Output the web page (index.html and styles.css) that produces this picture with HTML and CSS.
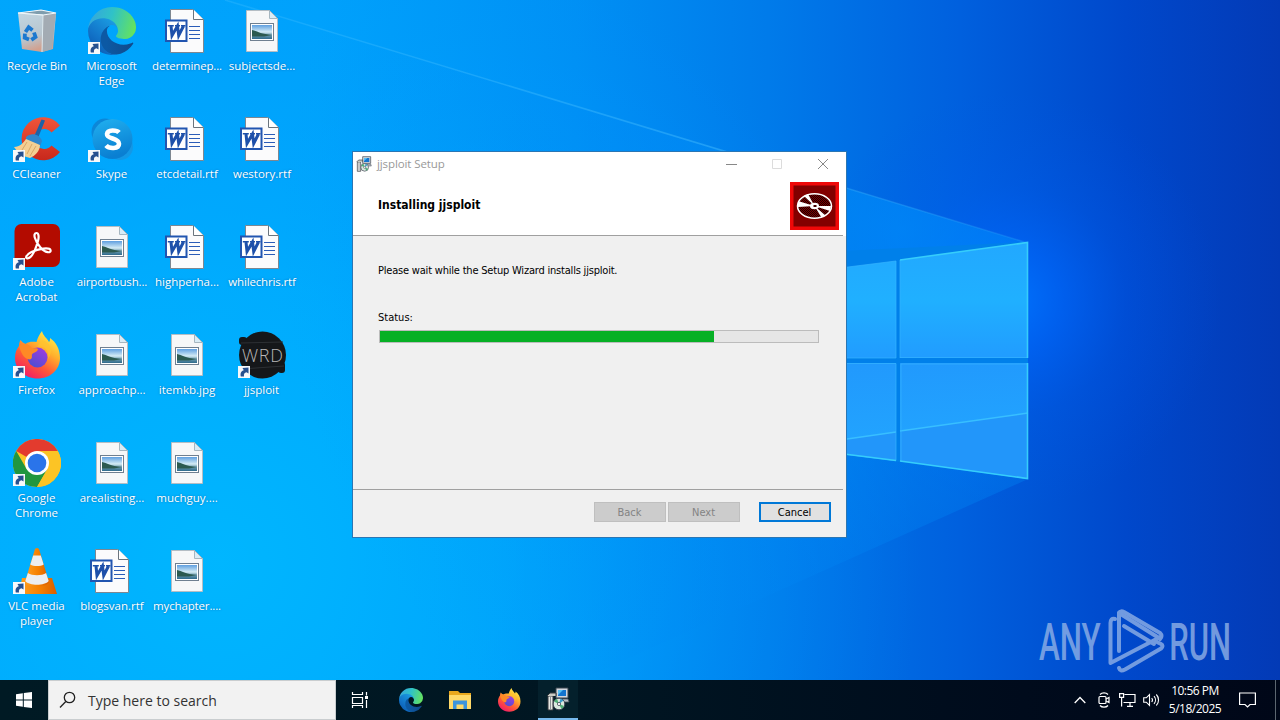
FILE: index.html
```html
<!DOCTYPE html>
<html lang="en">

<head>
    <meta charset="UTF-8">
    <meta name="viewport" content="width=device-width, initial-scale=1.0">
    <title>Desktop</title>
    <link rel="stylesheet" href="styles.css">
</head>

<body>
    <!-- shared icons -->
    <svg class="sprite" aria-hidden="true">
        <defs>
            <linearGradient id="edge-a" x1="0.2" y1="0.7" x2="1" y2="0.7">
                <stop offset="0" stop-color="#0c59a4" />
                <stop offset="1" stop-color="#114a8b" />
            </linearGradient>
            <linearGradient id="edge-b" x1="0.8" y1="0.1" x2="0.2" y2="1">
                <stop offset="0" stop-color="#1b9de2" />
                <stop offset="0.6" stop-color="#1273c8" />
                <stop offset="1" stop-color="#0a58b0" />
            </linearGradient>
            <linearGradient id="edge-c" x1="0" y1="0.4" x2="1" y2="0.6">
                <stop offset="0" stop-color="#35a6dd" />
                <stop offset="0.45" stop-color="#2fc2c8" />
                <stop offset="1" stop-color="#66e35c" />
            </linearGradient>
            <linearGradient id="bin-l" x1="0" y1="0" x2="0.3" y2="1">
                <stop offset="0" stop-color="#c4d8e4" />
                <stop offset="0.7" stop-color="#b8c5ce" />
                <stop offset="1" stop-color="#d2a08e" />
            </linearGradient>
            <linearGradient id="fox" x1="0.85" y1="0.05" x2="0.25" y2="1">
                <stop offset="0" stop-color="#fff14a" />
                <stop offset="0.35" stop-color="#ffb02c" />
                <stop offset="0.65" stop-color="#ff5a36" />
                <stop offset="1" stop-color="#f0186a" />
            </linearGradient>
            <linearGradient id="fox-in" x1="0.8" y1="0" x2="0.2" y2="1">
                <stop offset="0" stop-color="#a03ce0" />
                <stop offset="1" stop-color="#4a4fd0" />
            </linearGradient>
            <linearGradient id="skype" x1="0" y1="0" x2="0.3" y2="1">
                <stop offset="0" stop-color="#21b1f0" />
                <stop offset="1" stop-color="#0a7fd2" />
            </linearGradient>
            <linearGradient id="cc" x1="0" y1="0" x2="0" y2="1">
                <stop offset="0" stop-color="#f0553a" />
                <stop offset="1" stop-color="#c8281c" />
            </linearGradient>
            <linearGradient id="vlc" x1="0" y1="0" x2="1" y2="0">
                <stop offset="0" stop-color="#ffa022" />
                <stop offset="0.55" stop-color="#f58000" />
                <stop offset="1" stop-color="#d85e00" />
            </linearGradient>
            <linearGradient id="photo" x1="0" y1="0" x2="0" y2="1">
                <stop offset="0" stop-color="#5f9fe0" />
                <stop offset="0.5" stop-color="#d5ecf5" />
                <stop offset="0.7" stop-color="#6f9db0" />
                <stop offset="1" stop-color="#2e6a8c" />
            </linearGradient>
        </defs>

        <symbol id="i-shortcut" viewBox="0 0 12 12">
            <rect width="12" height="12" fill="#f7f8fa" />
            <path d="M2.800 10.500C2 7 3.500 4.700 5.800 4.300L4.500 2l6-.4v6L8.500 6.200C6.500 6.500 5.600 8 6 10.500z" fill="#27508f" />
        </symbol>

        <symbol id="i-bin" viewBox="0 0 48 48">
            <path d="M5 5l23-3 15 3-3 36-11 3-20-3z" fill="url(#bin-l)" />
            <path d="M5 5l23-3 15 3-13 2z" fill="#7f9dae" />
            <path d="M30 7l13-2-4 36-10 3z" fill="#a3abb3" />
            <path d="M5 5l25 2-1 37" fill="none" stroke="#dde9ef" stroke-width="1" />
            <path d="M5 5l23-3 15 3-13 2z" fill="none" stroke="#eef6fa" stroke-width="1.200" />
            <g fill="none" stroke="#1b78cf" stroke-width="3.800">
                <path d="M12.500 24l3.200-4.800 3.800 3" />
                <path d="M21 24.500l1.500 4.500-4.200 2.800" />
                <path d="M16 31.500l-4.300-1.800.2-4" />
            </g>
        </symbol>

        <symbol id="i-edge" viewBox="0 0 256 256">
            <path fill="url(#edge-a)" d="M235.68 190.46a93.73 93.73 0 01-10.54 4.71 101.87 101.87 0 01-35.9 6.46c-47.32 0-88.54-32.55-88.54-74.32A31.48 31.48 0 01117.13 100c-42.8 1.8-53.8 46.4-53.8 72.53 0 73.88 68.09 81.37 82.76 81.37 7.91 0 19.84-2.3 27-4.56l1.31-.44a128.34 128.34 0 0066.6-52.8 4 4 0 00-5.32-5.64z" />
            <path fill="url(#edge-b)" d="M105.73 241.42a79.2 79.2 0 01-22.74-21.34 80.72 80.72 0 0129.53-120c3.12-1.47 8.45-4.13 15.54-4a32.35 32.35 0 0125.69 13 31.88 31.88 0 016.36 18.66c0-.21 24.46-79.6-80-79.6-43.9 0-80 41.66-80 78.21a130.15 130.15 0 0012.11 56 128 128 0 00156.38 67.11 75.55 75.55 0 01-62.78-8z" />
            <path fill="url(#edge-c)" d="M152.33 148.86c-.81 1.05-3.3 2.5-3.3 5.66 0 2.61 1.7 5.12 4.72 7.23 14.38 10 41.49 8.68 41.56 8.68a59.56 59.56 0 0030.27-8.35 61.38 61.38 0 0030.43-52.88c.26-22.41-8-37.31-11.34-43.91C223.46 23.95 177.72 0 128 0A128 128 0 000 126.2c.48-36.54 36.8-66.05 80-66.05 3.5 0 23.46.34 42 10.07 16.34 8.58 24.9 18.94 30.85 29.21 6.18 10.67 7.28 24.15 7.28 29.52s-2.74 13.33-7.8 19.91z" />
        </symbol>

        <symbol id="i-word" viewBox="0 0 48 48">
            <path d="M7.500 1.500h22l11 10v33h-33z" fill="#fbfbfc" stroke="#7d8791" />
            <path d="M30.500 1.500v10h10" fill="#fff" stroke="#6b747d" />
            <path d="M26 18.500h11M26 22.500h11M26 26.500h11M26 30.500h11" stroke="#2b5cb8" stroke-width="1.200" />
            <rect x="3" y="12.500" width="20.500" height="20.500" fill="#fff" stroke="#2155b0" stroke-width="2" />
            <path d="M8 18l1 9.500L14.500 18l1.200 9.500L20.500 18" fill="none" stroke="#1e50aa" stroke-width="3" />
            <path d="M4.800 17.700h6M12 17.700h5M18 17.700h4.500" fill="none" stroke="#1e50aa" stroke-width="1.500" />
        </symbol>

        <symbol id="i-image" viewBox="0 0 48 48">
            <path d="M8.500 2.500h23l8 8v33h-31z" fill="#f6f7f8" stroke="#b4bdc4" />
            <path d="M31.500 2.500v8h8z" fill="#d9ecf6" stroke="#a6b6c0" />
            <rect x="12.500" y="15.500" width="23" height="17" fill="#fff" stroke="#6f7f90" />
            <rect x="14" y="17" width="20" height="14" fill="url(#photo)" />
            <path d="M14 22c5 1 8 4 20 5l-8 1.500H14z" fill="#2c5a50" />
        </symbol>

        <symbol id="i-ccleaner" viewBox="0 0 48 48">
            <path d="M47 10.500A21.500 21.500 0 1 0 47 37L38.500 30.500a10 10 0 1 1 0-13z" fill="url(#cc)" />
            <path d="M28.500 4.500l3.500 1-8 20-4-1.500z" fill="#1c62a8" />
            <path d="M13 22c5-5 14-3 16 4l-2 6-14-6z" fill="#2f86cc" />
            <path d="M13 24l14 6c0 6-5 11-10 13l-10-3-6-8c6 0 9-4 12-8z" fill="#f3cf93" />
            <path d="M14 27l-5 8M19 29l-5 10M23 31l-6 10" stroke="#d9a765" stroke-width="1" />
        </symbol>

        <symbol id="i-skype" viewBox="0 0 48 48">
            <circle cx="17" cy="17" r="13.500" fill="#0c87d8" />
            <circle cx="32" cy="32" r="13" fill="#1398e6" />
            <circle cx="24.500" cy="24" r="20" fill="url(#skype)" />
            <path d="M31 17.500c-2-2.300-11.500-3.500-12 1.500-.4 5.500 12 3.500 12 9.800 0 5.500-10 5-13 1.700" fill="none" stroke="#fff" stroke-width="4.600" />
        </symbol>

        <symbol id="i-acrobat" viewBox="0 0 48 48">
            <rect x="1.500" y="1" width="45.500" height="43" rx="7" fill="#b30b00" />
            <path d="M23.500 10c-4 0-1.800 8 4 14.500 4.500 5.500 11 6 10 2.500-1-3-12-1.500-19 2-6 3-6.500 6.500-3.800 6.300 4-.3 8-9.300 10.300-17.300 1.200-4.500.5-8-1.500-8z" fill="none" stroke="#fff" stroke-width="2.200" />
        </symbol>

        <symbol id="i-firefox" viewBox="0 0 48 48">
            <path d="M29 0c1 5 5 7 7 11 1-1 1-2 1-4 6 4 10 11 10 20 0 12-10 20.500-22.500 20.500S2 38.500 2 27c0-5 1.500-9 4-12 0-2 .4-4 1.500-6 1.500 2 3 3.200 5 4 4-3 8-2 11-2 1-4 3-8 5.500-11z" fill="url(#fox)" />
            <circle cx="24.500" cy="26.500" r="10" fill="url(#fox-in)" />
            <path d="M6 15c5-4 10-2 13 2 4 .3 6 0 6 1.500-.5 2.500-5 3-6 5-.5 1.500 1 4-2 5-4 0-8-3-11-13.500z" fill="#ff8a25" />
            <path d="M24 16c7-2 13 4 11 12 6-8 2-17-6-19z" fill="#ffc32e" opacity=".7" />
        </symbol>

        <symbol id="i-chrome" viewBox="0 0 48 48">
            <circle cx="24" cy="24" r="24" fill="#fcc425" />
            <path d="M24 24L3.200 12A24 24 0 0 1 44.800 12H24z" fill="#e33b2e" />
            <path d="M3.200 12A24 24 0 0 0 24 48l10.400-18L24 24l-10.400 6z" fill="#21963f" />
            <path d="M24 12h20.800A24 24 0 0 1 24 48l10.400-18z" fill="#fcc425" />
            <circle cx="24" cy="24" r="12" fill="#fff" />
            <circle cx="24" cy="24" r="9.300" fill="#2a74ea" />
        </symbol>

        <symbol id="i-vlc" viewBox="0 0 48 48">
            <path d="M9 31h30l5 16H6z" fill="url(#vlc)" />
            <path d="M24 1c1.200 0 2 .8 2.400 2.300L36 35c-2 6-22 6-24 0l9.600-31.700C22 1.800 22.800 1 24 1z" fill="url(#vlc)" />
            <path d="M20.200 8.500h7.600l2.900 9c-3 2-10.400 2-13.400 0z" fill="#eceef0" />
            <path d="M14.900 26c4 3 14.200 3 18.200 0l2.600 8c-4 5-19.400 5-23.400 0z" fill="#eceef0" />
        </symbol>

        <symbol id="i-installer" viewBox="0 0 24 24">
            <path d="M10 1h12v10H10z" fill="#d3d8df" stroke="#39424c" />
            <path d="M12 3h8v6h-8z" fill="#1374cf" />
            <path d="M12 3h5l-5 5z" fill="#56c1f5" />
            <path d="M12 12h10l1 3H11z" fill="#b9bfc6" stroke="#4c545e" stroke-width=".8" />
            <path d="M2 9h5v14H2z" fill="#e8e8e4" stroke="#34383e" />
            <path d="M1 9l3-3h6v3" fill="#c9cbc4" stroke="#34383e" />
            <path d="M4.500 10v12" stroke="#8c8f94" />
            <circle cx="13" cy="17" r="5.800" fill="#d9e8df" stroke="#445" />
            <path d="M13 17l-5-2.500a5.500 5.500 0 0 1 3-2.700zM13 17l5 2a5.500 5.500 0 0 1-2.500 3z" fill="#4fae76" />
            <path d="M13 17l1.500-5.500a5.500 5.500 0 0 1 3 2z" fill="#3b9cc9" />
            <circle cx="13" cy="17" r="1.600" fill="#fff" stroke="#445" stroke-width=".8" />
        </symbol>
    </svg>

    <div class="desktop">
        <svg class="wallpaper" viewBox="0 0 1280 720" aria-hidden="true">
            <defs>
                <linearGradient id="sky" x1="0" y1="0" x2="1" y2="0">
                    <stop offset="0" stop-color="#00a8fb" />
                    <stop offset="0.25" stop-color="#00a2fb" />
                    <stop offset="0.45" stop-color="#0090f4" />
                    <stop offset="0.6" stop-color="#007bea" />
                    <stop offset="0.75" stop-color="#0060de" />
                    <stop offset="0.88" stop-color="#0048cb" />
                    <stop offset="1" stop-color="#033ab6" />
                </linearGradient>
                <radialGradient id="lowleft" gradientUnits="userSpaceOnUse" cx="220" cy="560" r="700">
                    <stop offset="0" stop-color="#00b8ff" stop-opacity="0.9" />
                    <stop offset="0.4" stop-color="#00b0ff" stop-opacity="0.65" />
                    <stop offset="0.75" stop-color="#00a0ff" stop-opacity="0.25" />
                    <stop offset="1" stop-color="#0090ff" stop-opacity="0" />
                </radialGradient>
                <radialGradient id="glow" gradientUnits="userSpaceOnUse" cx="1010" cy="300" r="210">
                    <stop offset="0" stop-color="#0074ff" stop-opacity="0.9" />
                    <stop offset="0.25" stop-color="#0068ff" stop-opacity="0.6" />
                    <stop offset="0.55" stop-color="#005ef4" stop-opacity="0.25" />
                    <stop offset="1" stop-color="#0055e8" stop-opacity="0" />
                </radialGradient>
                <radialGradient id="beam" gradientUnits="userSpaceOnUse" cx="900" cy="230" r="620">
                    <stop offset="0" stop-color="#0094ff" stop-opacity="0.6" />
                    <stop offset="0.4" stop-color="#008cf8" stop-opacity="0.35" />
                    <stop offset="0.7" stop-color="#0088f4" stop-opacity="0.12" />
                    <stop offset="1" stop-color="#0088f4" stop-opacity="0" />
                </radialGradient>
                <linearGradient id="ray" gradientUnits="userSpaceOnUse" x1="225" y1="0" x2="1028" y2="0">
                    <stop offset="0" stop-color="#4fc4ff" stop-opacity="0.25" />
                    <stop offset="0.6" stop-color="#4fc4ff" stop-opacity="0.4" />
                    <stop offset="1" stop-color="#4fc4ff" stop-opacity="0.15" />
                </linearGradient>
                <linearGradient id="pane" x1="0" y1="0" x2="0" y2="1">
                    <stop offset="0" stop-color="#22a8ff" />
                    <stop offset="0.5" stop-color="#20b0ff" />
                    <stop offset="1" stop-color="#219cff" />
                </linearGradient>
                <linearGradient id="pane-low" x1="0" y1="0" x2="0.1" y2="1">
                    <stop offset="0" stop-color="#2199fd" />
                    <stop offset="1" stop-color="#22a8ff" />
                </linearGradient>
            </defs>
            <rect width="1280" height="720" fill="url(#sky)" />
            <rect width="1280" height="720" fill="url(#lowleft)" />
            <rect width="1280" height="720" fill="url(#glow)" />
            <path d="M225 0L1028 243v236L580 680H0V0z" fill="url(#beam)" />
            <path d="M225 0L1028 243" stroke="url(#ray)" stroke-width="1.500" />
            <path d="M840 251l188-9v237l-188-25z" fill="#0080ea" />
            <path d="M840 268l56-7v97h-56zM900 260l128-18v116H900z" fill="url(#pane)" />
            <path d="M840 363h56v98l-56-7zM900 363h128v116l-128-18z" fill="url(#pane-low)" />
            <path d="M840 440l56-8v29l-56-7zM900 431l128-18v66l-128-18z" fill="#2296fa" />
            <path d="M840 440l56-8M900 431l128-18" stroke="#38bfff" stroke-width="1.500" />
            <path d="M840 268l56-7v97M900 358V260M840 358h56M900 357.500h127M840 363.500h56v97M901 461v-97h126" fill="none" stroke="#35b3ff" stroke-opacity=".7" />
            <path d="M900 260l127.500-17.500V358M1027.500 363v115.500L900 461M896 460.500l-56-7" fill="none" stroke="#36cdfb" stroke-width="1.600" />
        </svg>

        <div class="icons">
            <div class="icon"><svg><use href="#i-bin" /></svg><span>Recycle Bin</span></div>
            <div class="icon shortcut"><svg><use href="#i-ccleaner" /></svg><svg class="arrow"><use href="#i-shortcut" /></svg><span>CCleaner</span></div>
            <div class="icon shortcut"><svg><use href="#i-acrobat" /></svg><svg class="arrow"><use href="#i-shortcut" /></svg><span>Adobe Acrobat</span></div>
            <div class="icon shortcut"><svg><use href="#i-firefox" /></svg><svg class="arrow"><use href="#i-shortcut" /></svg><span>Firefox</span></div>
            <div class="icon shortcut"><svg><use href="#i-chrome" /></svg><svg class="arrow"><use href="#i-shortcut" /></svg><span>Google Chrome</span></div>
            <div class="icon shortcut"><svg><use href="#i-vlc" /></svg><svg class="arrow"><use href="#i-shortcut" /></svg><span>VLC media player</span></div>

            <div class="icon shortcut"><svg><use href="#i-edge" /></svg><svg class="arrow"><use href="#i-shortcut" /></svg><span>Microsoft Edge</span></div>
            <div class="icon shortcut"><svg><use href="#i-skype" /></svg><svg class="arrow"><use href="#i-shortcut" /></svg><span>Skype</span></div>
            <div class="icon long"><svg><use href="#i-image" /></svg><span>airportbush...</span></div>
            <div class="icon"><svg><use href="#i-image" /></svg><span>approachp...</span></div>
            <div class="icon"><svg><use href="#i-image" /></svg><span>arealisting...</span></div>
            <div class="icon"><svg><use href="#i-word" /></svg><span>blogsvan.rtf</span></div>

            <div class="icon long"><svg><use href="#i-word" /></svg><span>determinep...</span></div>
            <div class="icon"><svg><use href="#i-word" /></svg><span>etcdetail.rtf</span></div>
            <div class="icon"><svg><use href="#i-word" /></svg><span>highperha...</span></div>
            <div class="icon"><svg><use href="#i-image" /></svg><span>itemkb.jpg</span></div>
            <div class="icon"><svg><use href="#i-image" /></svg><span>muchguy....</span></div>
            <div class="icon long"><svg><use href="#i-image" /></svg><span>mychapter....</span></div>

            <div class="icon"><svg><use href="#i-image" /></svg><span>subjectsde...</span></div>
            <div class="icon"><svg><use href="#i-word" /></svg><span>westory.rtf</span></div>
            <div class="icon long"><svg><use href="#i-word" /></svg><span>whilechris.rtf</span></div>
            <div class="icon shortcut">
                <svg viewBox="0 0 48 48">
                    <circle cx="24.500" cy="24" r="23.500" fill="#15171a" />
                    <rect x="1" y="6" width="8" height="8" rx="3" fill="#15171a" />
                    <rect x="40" y="31" width="7" height="11" rx="3" fill="#15171a" />
                    <path d="M3 12l42-1M4 38l42-3" stroke="#2d3034" />
                    <text x="4" y="31" class="wrd-text" textLength="41">WRD</text>
                </svg>
                <svg class="arrow"><use href="#i-shortcut" /></svg>
                <span>jjsploit</span>
            </div>
        </div>

        <svg class="watermark" viewBox="0 0 200 70" aria-label="ANY RUN">
            <g transform="scale(0.6 1)">
                <text x="5" y="55" textLength="103" lengthAdjust="spacingAndGlyphs">ANY</text>
                <text x="222" y="55" textLength="103" lengthAdjust="spacingAndGlyphs">RUN</text>
            </g>
            <g fill="none" stroke-width="4" stroke-linejoin="round" stroke-linecap="round">
                <path d="M79 14c-3-1-4.500 1-4.500 4v40l46-24" />
                <path d="M83 46V8l40 25" />
                <path d="M88 21l30 18" />
                <path d="M83 63c1 3 3 3 6 1.500l36-21c2-2 2-3.500 0-4.500l-6-3" />
                <path d="M83 8c1-2 3-2 5-1l36 21c2 2 2 4 0 6" />
            </g>
        </svg>

        <div class="window">
            <div class="titlebar">
                <svg class="app-icon"><use href="#i-installer" /></svg>
                <span class="title">jjsploit Setup</span>
                <svg class="controls" viewBox="0 0 104 12" fill="none">
                    <path d="M0 6.500h11" stroke="#888" />
                    <path d="M46.500 1.500h9v9h-9z" stroke="#dcdcdc" />
                    <path d="M92 1l10 10M102 1L92 11" stroke="#888" />
                </svg>
            </div>
            <div class="header">
                <h2>Installing jjsploit</h2>
                <svg class="disc" viewBox="0 0 49 48">
                    <defs>
                        <pattern id="dots" width="2" height="2" patternUnits="userSpaceOnUse">
                            <rect width="2" height="2" fill="#7c0000" />
                            <rect width="1" height="1" fill="#1c0000" />
                            <rect x="1" y="1" width="1" height="1" fill="#1c0000" />
                        </pattern>
                    </defs>
                    <rect width="49" height="48" fill="#ee0808" />
                    <rect x="3.500" y="3.500" width="42" height="41" fill="#820000" />
                    <ellipse cx="24.500" cy="24" rx="17" ry="12.300" fill="url(#dots)" stroke="#fff" stroke-width="1.500" />
                    <path d="M24.500 24L8 19v6zM24.500 24L14 14l4-2zM24.500 24L41 24l-1 5zM24.500 24l7 11.500 4-2z" fill="#fff" />
                    <ellipse cx="24.500" cy="24" rx="4.500" ry="3.200" fill="#fff" />
                    <rect x="23.500" y="23" width="3" height="2" fill="#400" />
                </svg>
            </div>
            <div class="content">
                <p class="message">Please wait while the Setup Wizard installs jjsploit.</p>
                <p class="status">Status:</p>
                <div class="progress">
                    <div class="bar" style="width: 76.3%"></div>
                </div>
            </div>
            <div class="footer">
                <button disabled>Back</button>
                <button disabled>Next</button>
                <button class="cancel">Cancel</button>
            </div>
        </div>
    </div>

    <div class="taskbar">
        <div class="start">
            <svg width="16" height="16" viewBox="0 0 16 16" fill="#fff">
                <path d="M0 2.200L6.800 1.200V7.500H0zM7.800 1.100L16 0v7.500H7.800zM0 8.500h6.800v6.300L0 13.800zM7.800 8.500H16V16l-8.200-1.100z" />
            </svg>
        </div>
        <div class="search">
            <svg width="18" height="18" viewBox="0 0 18 18" fill="none" stroke="#222" stroke-width="1.300">
                <circle cx="10.500" cy="6.500" r="5.200" />
                <path d="M6.800 10.500L1 16.500" />
            </svg>
            <span>Type here to search</span>
        </div>
        <div class="task">
            <svg width="18" height="16" viewBox="0 0 18 16" fill="none" stroke="#fff" stroke-width="1.200">
                <path d="M1.500 0v2.500h10V0M1.500 5.500h10v6h-10zM1.500 16v-2.500h10V16M15.500 0v3.500M15.500 8v8" />
                <path d="M14 4h3v3h-3z" fill="#fff" stroke="none" />
            </svg>
        </div>
        <div class="task"><svg width="24" height="24"><use href="#i-edge" /></svg></div>
        <div class="task">
            <svg width="22" height="20" viewBox="0 0 22 20">
                <path d="M0 1h9l2 2h11v16H0z" fill="#e9a81e" />
                <path d="M0 5h22v14H0z" fill="#ffd969" />
                <path d="M4 10.500h14V19h-3.500v-4.500h-7V19H4z" fill="#3d94dc" />
            </svg>
        </div>
        <div class="task"><svg width="24" height="24"><use href="#i-firefox" /></svg></div>
        <div class="task active"><svg width="24" height="24"><use href="#i-installer" /></svg></div>

        <div class="tray">
            <svg class="chevron" width="12" height="8" viewBox="0 0 12 8" fill="none" stroke="#fff" stroke-width="1.300"><path d="M.7 7L6 1.500 11.300 7" /></svg>
            <svg width="12" height="16" viewBox="0 0 12 16" fill="none" stroke="#fff" stroke-width="1.200">
                <rect x="1" y="4.500" width="7" height="7" rx="1" />
                <path d="M8 7l3-1.500v5L8 9M2 2.500C4 .3 8 .3 10 2.500M2 13.500c2 2.200 6 2.200 8 0" />
            </svg>
            <svg width="17" height="14" viewBox="0 0 17 14" fill="none" stroke="#fff" stroke-width="1.200">
                <path d="M5.500 1.500h10.500v8H4.500M8 13.400h6M11 9.500v4M.6.600h4v3.800h-4zM2.600 4.400v9" />
            </svg>
            <svg class="volume" width="17" height="14" viewBox="0 0 17 14" fill="none" stroke="#fff" stroke-width="1.100">
                <path d="M.7 4.800h2.600L6.500 1.500v11L3.300 9.200H.7zM8.700 5c1 1.200 1 2.800 0 4M11 3.200c2 2.200 2 5.400 0 7.600M13.300 1.500c3 3.200 3 7.800 0 11" />
            </svg>
        </div>
        <div class="clock">
            <span>10:56 PM</span>
            <span>5/18/2025</span>
        </div>
        <div class="notify">
            <svg width="17" height="17" viewBox="0 0 17 17" fill="none" stroke="#fff" stroke-width="1.200">
                <path d="M.6 1h15.800v11.500H11L8.500 15 6 12.500H.6z" />
            </svg>
        </div>
    </div>
</body>

</html>
```

FILE: styles.css
```css
* {
    box-sizing: border-box;
}

body {
    margin: 0;
    width: 1280px;
    height: 720px;
    overflow: hidden;
    display: flex;
    flex-direction: column;
    font-family: "Open Sans", "Noto Sans", sans-serif;
    font-size: 12px;
}

.sprite {
    position: absolute;
    width: 0;
    height: 0;
}

.desktop {
    position: relative;
    height: 680px;
    overflow: hidden;
}

.wallpaper {
    position: absolute;
    top: 0;
    left: 0;
    width: 1280px;
    height: 720px;
}

/* desktop icons */
.icons {
    position: relative;
    width: 300px;
    display: grid;
    grid-auto-flow: column;
    grid-template-rows: repeat(6, 108px);
    grid-template-columns: repeat(4, 75px);
}

.icon {
    position: relative;
    padding-top: 8px;
    color: #fff;
    text-align: center;
    line-height: 15px;
}

.icon svg {
    display: block;
    width: 48px;
    height: 48px;
    margin-left: 13px;
}

.icon.shortcut > svg:first-child {
    margin-top: -1px;
    margin-bottom: 1px;
}

.icon .arrow {
    position: absolute;
    left: 0;
    top: 42px;
    width: 12px;
    height: 12px;
}

.icon span {
    display: block;
    margin: 2px 0 0 -1px;
    padding: 0 4px;
    font-size: 11.5px;
    text-shadow: 0 0 2px rgba(0, 50, 110, 0.5);
}

.icon.shortcut span {
    margin-top: 3px;
    margin-right: 1px;
}

.icon.long span {
    letter-spacing: -0.15px;
    white-space: nowrap;
    padding: 0;
}

.wrd-text {
    font-family: "Open Sans", sans-serif;
    font-size: 18px;
    font-weight: 300;
    fill: #b8b8b8;
}

.watermark {
    position: absolute;
    left: 1036px;
    top: 605px;
    width: 200px;
    height: 70px;
    fill: #8fb0e6;
    stroke: #8fb0e6;
    opacity: 0.8;
}

.watermark text {
    font-family: Roboto, sans-serif;
    font-size: 52px;
    font-weight: 500;
    stroke: none;
}

/* setup window */
.window {
    position: absolute;
    left: 352px;
    top: 151px;
    width: 495px;
    height: 387px;
    display: flex;
    flex-direction: column;
    border: 1px solid #2a76b4;
    background: #f0f0f0;
    font-family: "DejaVu Sans Condensed", "DejaVu Sans", sans-serif;
    font-size: 11px;
    color: #000;
}

.titlebar {
    display: flex;
    align-items: center;
    height: 24px;
    padding: 0 16px 0 3px;
    background: #fff;
    font-family: "Open Sans", sans-serif;
}

.app-icon {
    width: 16px;
    height: 16px;
}

.title {
    flex: 1;
    margin: -2px 0 0 5px;
    font-size: 11.5px;
    letter-spacing: -0.1px;
    color: #999;
}

.controls {
    width: 104px;
    height: 12px;
}

.header {
    display: flex;
    justify-content: space-between;
    align-items: flex-start;
    height: 60px;
    margin-right: 3px;
    padding: 6px 4px 0 25px;
    background: #fff;
    border-bottom: 1px solid #a0a0a0;
    box-shadow: 3px 0 0 #fff;
}

.header h2 {
    margin: 15px 0 0;
    font-size: 12px;
    line-height: 16px;
}

.disc {
    width: 49px;
    height: 48px;
}

.content {
    flex: 1;
    padding: 27px 27px 0 26px;
}

.content p {
    margin: 0 0 0 -1px;
    line-height: 16px;
}

.content .message {
    letter-spacing: -0.2px;
}

.content .status {
    margin-top: 31px;
}

.progress {
    height: 13px;
    margin-top: 4px;
    border: 1px solid #bcbcbc;
    background: #e6e6e6;
}

.bar {
    height: 100%;
    background: #06b025;
}

.footer {
    display: flex;
    height: 48px;
    margin-right: 3px;
    padding: 12px 12px 0;
    justify-content: flex-end;
    border-top: 1px solid #a0a0a0;
}

.footer button {
    width: 72px;
    height: 20px;
    margin-left: 2px;
    padding: 0 1px 0 0;
    border: 1px solid #bfbfbf;
    background: #cccccc;
    color: #838383;
    font-family: inherit;
    font-size: 11px;
}

.footer .cancel {
    margin-left: 19px;
    border: 2px solid #0078d7;
    background: #e1e1e1;
    color: #000;
}

/* taskbar */
.taskbar {
    position: relative;
    display: flex;
    height: 40px;
    padding-right: 4px;
    background: linear-gradient(90deg, #001a24, #001622 45%, #000b1c 80%, #000718);
    color: #fff;
}

.start {
    width: 48px;
    display: flex;
    align-items: center;
    justify-content: center;
}

.search {
    display: flex;
    align-items: center;
    width: 288px;
    margin-right: 4px;
    padding-left: 10px;
    border: 1px solid #c9cdcf;
    background: #f2f2f2;
    color: #333;
    font-size: 14px;
}

.search span {
    margin-left: 11px;
}

.task {
    display: flex;
    align-items: center;
    justify-content: center;
    width: 40px;
    margin-right: 9px;
}

.task:nth-of-type(3) {
    margin-right: 11px;
}

.task.active {
    background: #04202c;
    border-bottom: 2px solid #76b9ed;
}

.tray {
    display: flex;
    align-items: center;
    gap: 9px;
    margin-left: auto;
}

.tray .chevron {
    margin-right: 3px;
}

.tray .volume {
    margin-left: -2px;
}

.clock {
    display: flex;
    flex-direction: column;
    justify-content: center;
    width: 70px;
    line-height: 18px;
    text-align: center;
    font-size: 12px;
    letter-spacing: -0.5px;
}

.notify {
    display: flex;
    align-items: center;
    justify-content: center;
    width: 46px;
    padding-right: 11px;
    border-right: 1px solid #5c6670;
}
```
